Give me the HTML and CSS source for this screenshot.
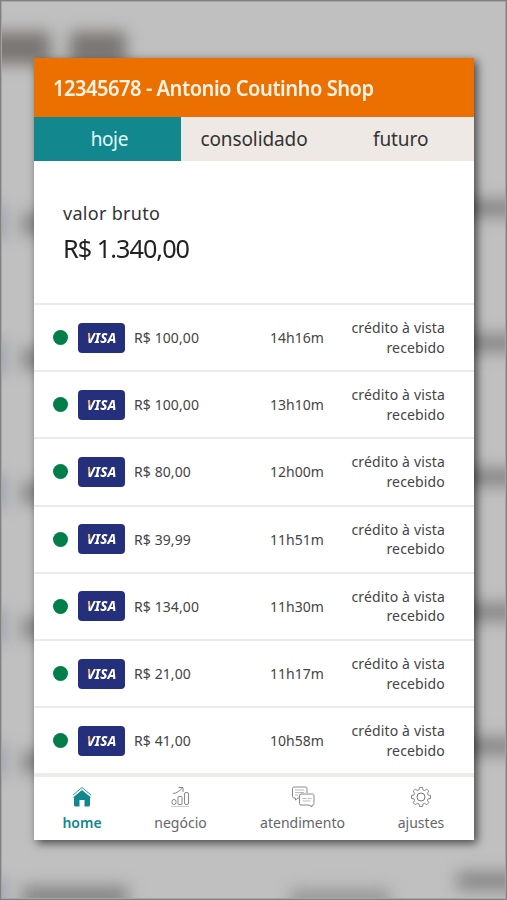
FILE: index.html
```html
<!DOCTYPE html>
<html lang="pt-BR">
<head>
  <meta charset="UTF-8">
  <meta name="viewport" content="width=device-width, initial-scale=1.0">
  <title>Vendas - hoje</title>
  <link rel="stylesheet" href="styles.css">
</head>
<body>
  <div class="backdrop">
    <div class="smudge-title"><i></i><i></i></div>
    <div class="smudge-row"><i class="flag"></i><i class="left"></i><i class="right"></i></div>
    <div class="smudge-row"><i class="flag"></i><i class="left"></i><i class="right"></i></div>
    <div class="smudge-row"><i class="flag"></i><i class="left"></i><i class="right"></i></div>
    <div class="smudge-row"><i class="flag"></i><i class="left"></i><i class="right"></i></div>
    <div class="smudge-row"><i class="flag"></i><i class="left"></i><i class="right"></i></div>
    <div class="smudge-row"><i class="flag"></i><i class="left"></i><i class="middle"></i><i class="right"></i></div>
  </div>

  <div class="app">
    <header class="header"><h1>12345678 - Antonio Coutinho Shop</h1></header>

    <nav class="tabs">
      <a class="tab active">hoje</a>
      <a class="tab">consolidado</a>
      <a class="tab">futuro</a>
    </nav>

    <section class="total">
      <p class="label">valor bruto</p>
      <p class="amount">R$ 1.340,00</p>
    </section>

    <ul class="sales" id="sales"></ul>

    <nav class="menu">
      <a class="item home">
        <svg width="22" height="22" viewBox="0 0 22 22">
          <path d="M2 9 11 1.500 20 9" fill="none" stroke="#12888e" stroke-width=".9"/>
          <path d="M2 11.500 11 4l9 7.500h-1V19q0 1.500-1.500 1.500h-4V14h-5v6.500h-4Q3 20.500 3 19v-7.500z" fill="#12888e"/>
        </svg>
        <span>home</span>
      </a>
      <a class="item negocio">
        <svg width="22" height="22" viewBox="0 0 22 22" fill="none" stroke="#888" stroke-width="1">
          <path d="M1 20.500h18" stroke="#ccc"/>
          <rect x="2" y="13.500" width="4" height="5" rx="2"/>
          <rect x="8" y="10.500" width="4" height="8" rx=".5"/>
          <rect x="14.500" y="6.500" width="4" height="12" rx="1.500"/>
          <path d="M3 7.500c4-.3 6.500-2.500 9.500-5.500M8.500 1.500H13V6"/>
        </svg>
        <span>negócio</span>
      </a>
      <a class="item atendimento">
        <svg width="24" height="22" viewBox="0 0 24 22" fill="none" stroke="#888" stroke-width="1">
          <path d="M8.500 12H7l-2.500 2v-2H3q-1.500 0-1.500-1.500V2.500Q1.500 1 3 1h11.500Q16 1 16 2.500v4.500"/>
          <path d="M4 4h9M4 6.500h9M4 9h3" stroke="#bbb"/>
          <path d="M10 8h11.500q1.500 0 1.500 1.500v8q0 1.500-1.500 1.500H21v2L18 19h-8q-1.500 0-1.500-1.500v-8Q8.500 8 10 8z"/>
          <path d="M11.500 12.500h4M17 12.500h3.500M11.500 15h8" stroke="#bbb"/>
        </svg>
        <span>atendimento</span>
      </a>
      <a class="item ajustes">
        <svg width="22" height="22" viewBox="0 0 22 22" fill="none" stroke="#777" stroke-width="1">
          <path d="M9.400 1.500h3.200l.6 2.800 1.600.7 2.500-1.600 2.300 2.300L18 8.200l.7 1.600 2.800.6v3.200l-2.800.6-.7 1.600 1.600 2.500-2.300 2.300-2.500-1.600-1.600.7-.6 2.800H9.400l-.6-2.800-1.600-.7-2.500 1.600-2.300-2.300L4 15.800l-.7-1.600-2.800-.6v-3.200l2.800-.6L4 8.200 2.400 5.700l2.300-2.300L7.200 5l1.600-.7z" transform="translate(1 0) scale(.91)" stroke-linejoin="round"/>
          <circle cx="11" cy="11" r="4"/>
        </svg>
        <span>ajustes</span>
      </a>
    </nav>
  </div>

  <script>
    const vendas = [
      ["R$ 100,00", "14h16m"],
      ["R$ 100,00", "13h10m"],
      ["R$ 80,00", "12h00m"],
      ["R$ 39,99", "11h51m"],
      ["R$ 134,00", "11h30m"],
      ["R$ 21,00", "11h17m"],
      ["R$ 41,00", "10h58m"]
    ];

    document.getElementById("sales").innerHTML = vendas.map(([valor, hora]) => `
      <li class="sale">
        <span class="dot"></span>
        <span class="visa"><b>VISA</b></span>
        <span class="value">${valor}</span>
        <span class="time">${hora}</span>
        <span class="status">crédito à vista<br>recebido</span>
      </li>`).join("");
  </script>
</body>
</html>
```
FILE: styles.css
```css
* { box-sizing: border-box; }

body {
  position: relative;
  height: 900px;
  margin: 0;
  padding: 58px 33px 0 34px;
  overflow: hidden;
  background: #c0c0c0;
  font-family: "Noto Sans", sans-serif;
  color: #444;
}

h1, p, ul { margin: 0; padding: 0; }

/* blurred screen behind the card */
.backdrop {
  position: absolute;
  inset: 0;
  overflow: hidden;
}

.backdrop::after {
  content: "";
  position: absolute;
  inset: 0;
  border: 1px solid #808080;
  box-shadow: inset 0 0 0 1px #a5a5a5;
}

.backdrop i { display: block; flex-shrink: 0; filter: blur(8px); }

.smudge-title {
  display: flex;
  gap: 20px;
  height: 156px;
  padding-top: 32px;
}

.smudge-title i { width: 56px; height: 32px; background: #787573; }
.smudge-title i:first-child { width: 66px; margin-left: -16px; }

.smudge-row {
  display: flex;
  height: 134.5px;
}

.flag { width: 8px; height: 36px; margin: 48px 0 0 -6px; background: #8385a0; }
.left { width: 106px; height: 22px; margin: 57px 0 0 20px; background: #868686; }
.right { width: 125px; height: 18px; margin: 43px -75px 0 auto; background: #868686; }
.middle { width: 100px; height: 22px; margin: 60px 0 0 162px; background: #989898; }

.app {
  position: relative;
  height: 782px;
  background: #fff;
  box-shadow: 3px 3px 9px rgba(0, 0, 0, .65);
}

.header {
  display: flex;
  align-items: center;
  height: 59px;
  padding-left: 19px;
  background: #ec7000;
}

.header h1 {
  font-size: 21px;
  font-weight: 600;
  line-height: 28px;
  letter-spacing: -.5px;
  white-space: nowrap;
  color: #fff4e6;
  transform: scaleX(.957);
  transform-origin: left;
}

.tabs {
  display: grid;
  grid-template-columns: repeat(3, 1fr);
  height: 44px;
  background: #eee9e4;
}

.tab {
  display: flex;
  align-items: center;
  justify-content: center;
  font-size: 19px;
  letter-spacing: -.1px;
  color: #333;
}

.tab.active {
  padding-left: 4px;
  letter-spacing: -.4px;
  background: #12888e;
  color: #e4ffff;
}

.total { height: 142px; padding: 38px 0 0 29px; }
.total .label { font-size: 18px; line-height: 28px; letter-spacing: .3px; color: #333; }

.total .amount {
  font-size: 26px;
  line-height: 42px;
  letter-spacing: -1px;
  color: #222;
  transform: scaleX(.97);
  transform-origin: left;
}

.sales { list-style: none; }

.sale {
  display: grid;
  grid-template-columns: 25px 56px 136px 1fr auto;
  align-items: center;
  height: 67.2px;
  padding: 0 29px 0 19px;
  border-top: 2px solid #ebebeb;
  font-size: 14px;
}

.value { letter-spacing: .1px; }

.dot { width: 15px; height: 15px; border-radius: 50%; background: #007f49; }

.visa {
  display: flex;
  align-items: center;
  justify-content: center;
  width: 47px;
  height: 30px;
  border-radius: 4px;
  background: #24307c;
  font-size: 13.5px;
  font-style: italic;
}

.visa b {
  font-weight: 800;
  background: linear-gradient(135deg, #e8b060 24%, #fff 25%);
  background-size: 100% 100%;
  -webkit-background-clip: text;
  background-clip: text;
  color: transparent;
}

.status { line-height: 19.5px; letter-spacing: .15px; text-align: right; white-space: nowrap; }

.menu {
  display: grid;
  grid-template-columns: 96px 101px 143px 94px;
  height: 67px;
  border-top: 4px solid #eeece6;
  font-size: 14px;
  color: #666;
}

.item {
  display: flex;
  flex-direction: column;
  align-items: center;
  gap: 5px;
  padding-top: 9px;
}

.item.home { color: #12888e; font-weight: 600; }
```
